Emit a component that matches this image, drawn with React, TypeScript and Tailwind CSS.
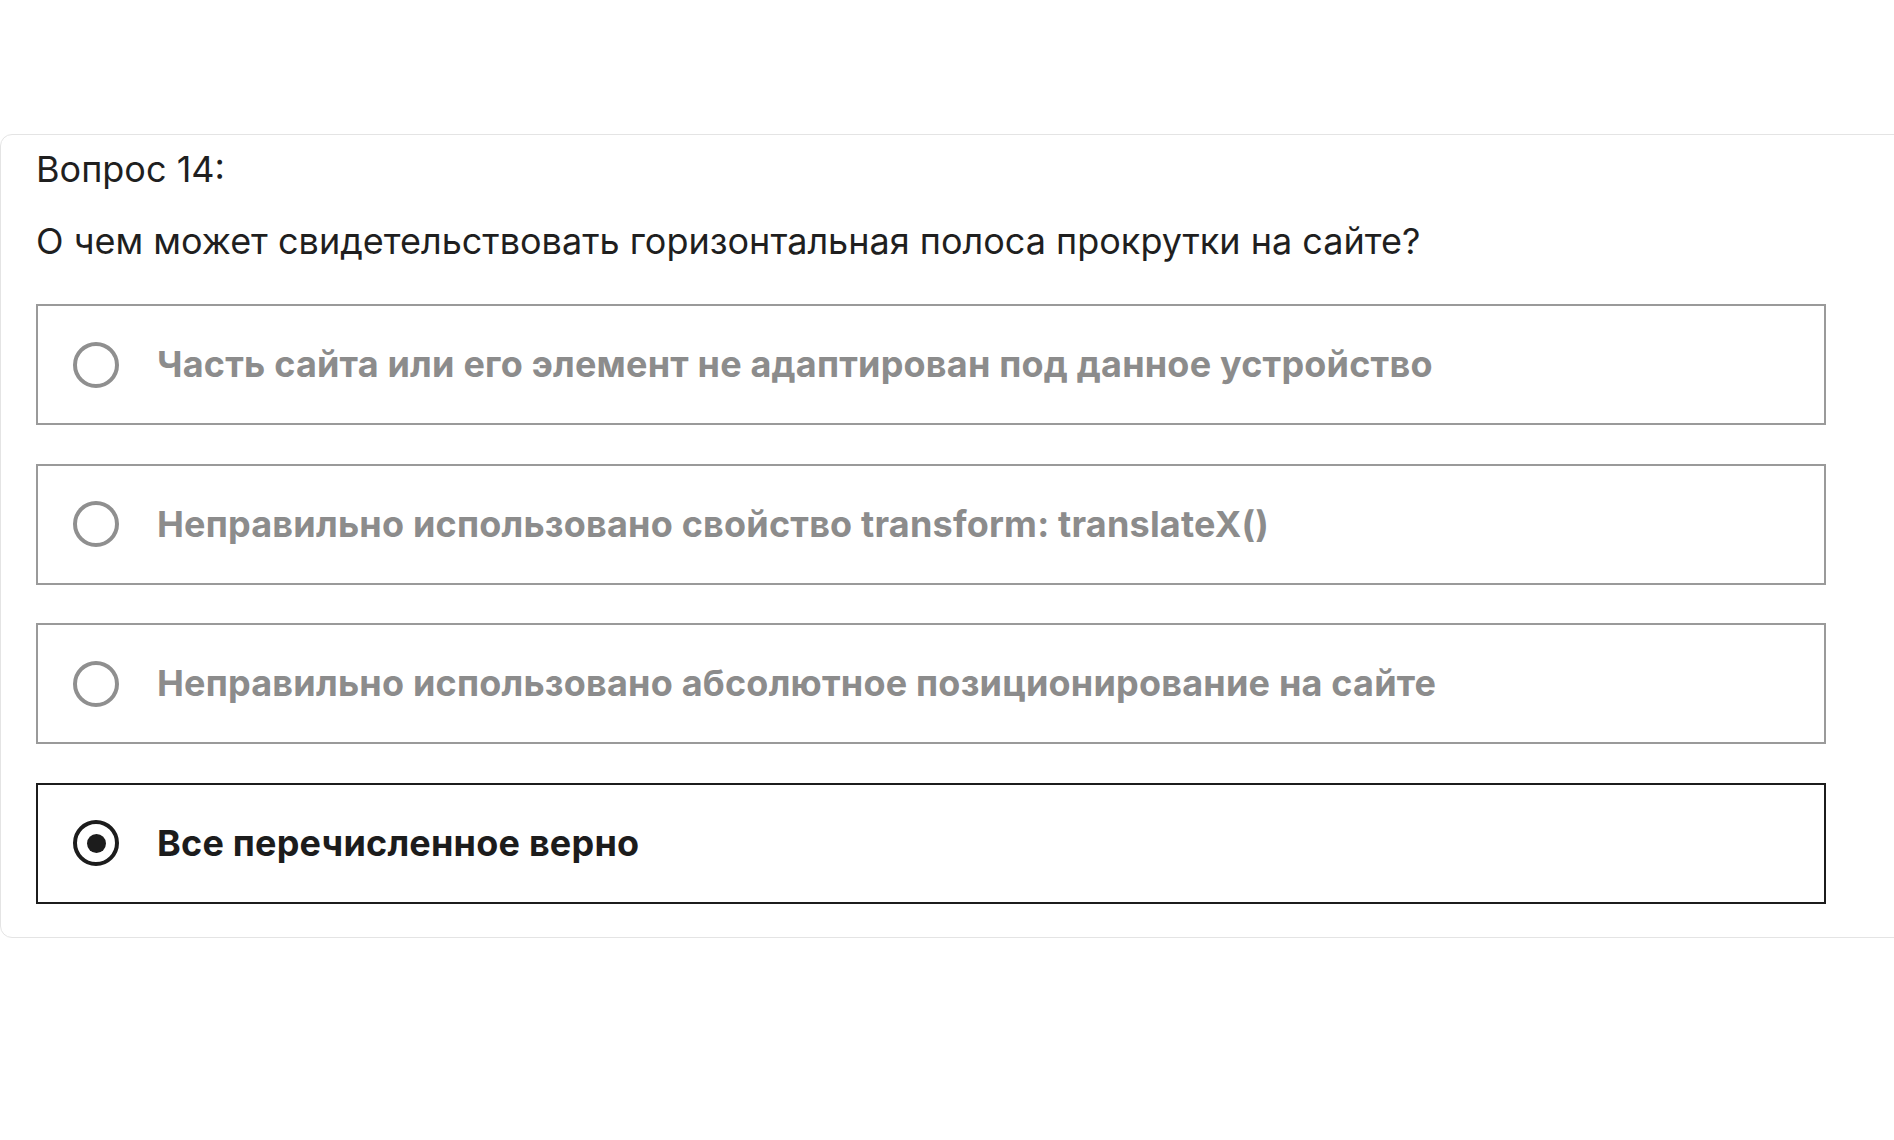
import React from "react";

const options = [
  "Часть сайта или его элемент не адаптирован под данное устройство",
  "Неправильно использовано свойство transform: translateX()",
  "Неправильно использовано абсолютное позиционирование на сайте",
  "Все перечисленное верно",
];

function Radio({ checked }: { checked: boolean }) {
  return (
    <div
      className={
        "flex h-[46px] w-[46px] shrink-0 items-center justify-center rounded-full border-[4px] " +
        (checked ? "border-[#1c1c1c]" : "border-[#8f8f8f]")
      }
    >
      {checked && <div className="h-[19px] w-[19px] rounded-full bg-[#1c1c1c]" />}
    </div>
  );
}

export default function App() {
  return (
    <div
      className="min-h-[1140px] w-full overflow-hidden bg-white pt-[134px]"
      style={{ fontFamily: "Inter, 'Noto Sans', sans-serif" }}
    >
      <div className="w-[1920px] rounded-[12px] border border-[#e4e4e4] pb-[33px] pl-[35px] pt-[13px]">
        <div className="text-[36px] leading-[43px] text-[#1f1f1f]">Вопрос 14:</div>
        <div className="mt-[29px] text-[36px] leading-[43px] text-[#1f1f1f]">
          О чем может свидетельствовать горизонтальная полоса прокрутки на сайте?
        </div>
        <div className="mt-[41px] flex w-[1790px] flex-col gap-[38.5px]">
          {options.map((o, i) => {
            const checked = i === 3;
            return (
              <div
                key={i}
                className={
                  "flex h-[121px] items-center gap-[38px] border-2 pl-[35px] " +
                  (checked ? "border-[#1c1c1c]" : "border-[#9a9a9a]")
                }
              >
                <Radio checked={checked} />
                <span
                  className={
                    "text-[36px] font-bold leading-[43px] tracking-[0.2px] " +
                    (checked ? "text-[#1c1c1c]" : "text-[#8c8c8c]")
                  }
                >
                  {o}
                </span>
              </div>
            );
          })}
        </div>
      </div>
    </div>
  );
}
